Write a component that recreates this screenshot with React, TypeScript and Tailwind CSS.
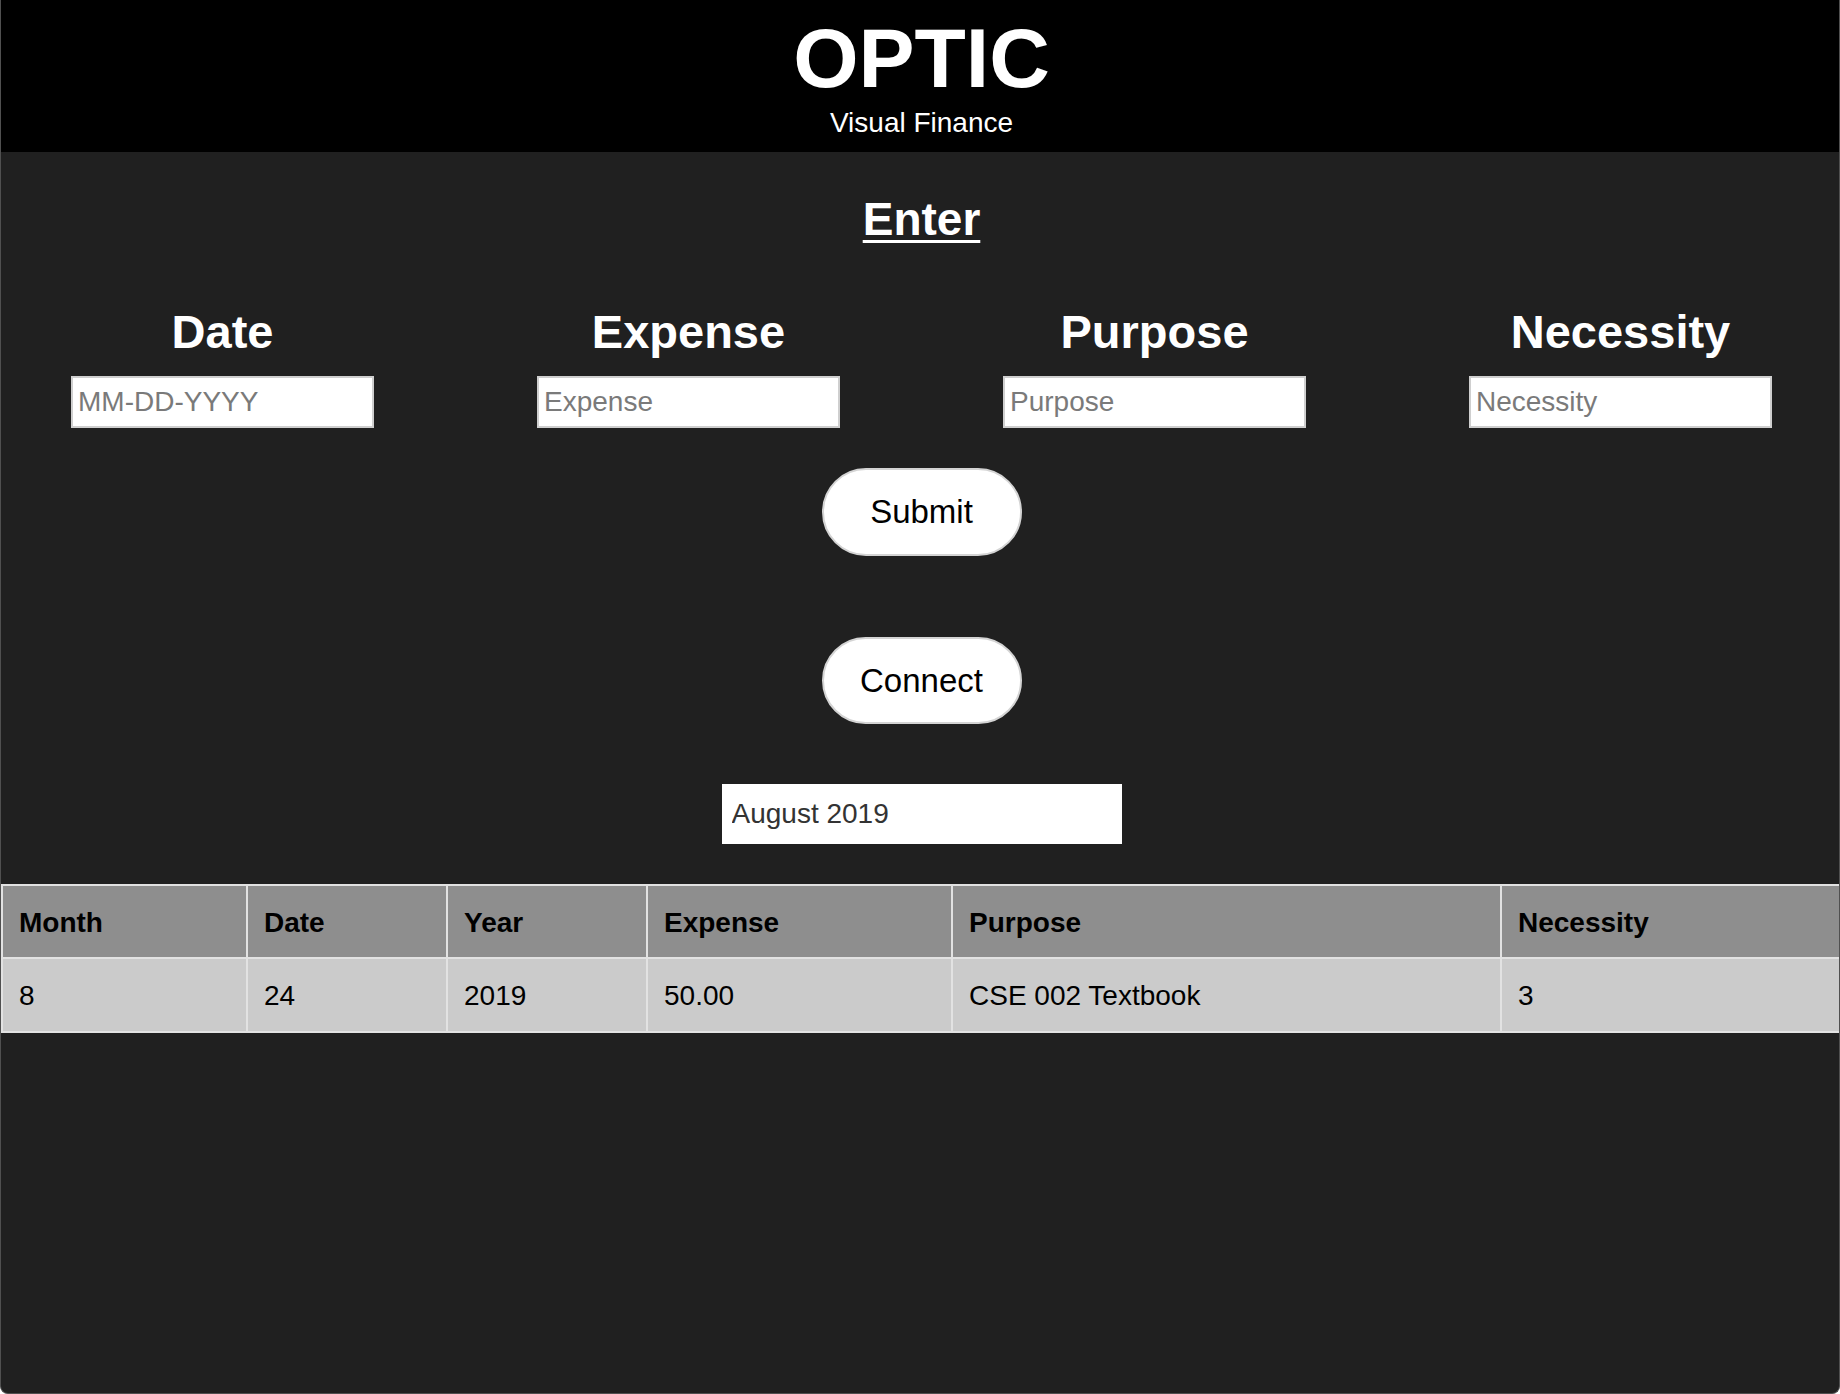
import { useState } from 'react';

type Row = {
  month: string;
  date: string;
  year: string;
  expense: string;
  purpose: string;
  necessity: string;
};

const fields = [
  { label: 'Date', placeholder: 'MM-DD-YYYY' },
  { label: 'Expense', placeholder: 'Expense' },
  { label: 'Purpose', placeholder: 'Purpose' },
  { label: 'Necessity', placeholder: 'Necessity' },
];

const rows: Row[] = [
  { month: '8', date: '24', year: '2019', expense: '50.00', purpose: 'CSE 002 Textbook', necessity: '3' },
];

export default function App() {
  const [values, setValues] = useState<string[]>(['', '', '', '']);
  const [month, setMonth] = useState('August 2019');

  return (
    <div className="min-h-[1394px] bg-[#202020] font-['Liberation_Sans',Arial,sans-serif] border-x border-b border-[#505050] rounded-b-lg overflow-hidden">
      {/* Header */}
      <header className="h-[152px] bg-black text-white text-center pt-[16px] pl-[3px]">
        <h1 className="text-[84px] font-bold leading-none">OPTIC</h1>
        <p className="mt-[9px] text-[28px] leading-none">Visual Finance</p>
      </header>

      {/* Entry form */}
      <section className="flex flex-col items-center text-white pl-[3px]">
        <h2 className="mt-[44px] text-[46px] font-bold leading-none underline underline-offset-[5px] decoration-[3px]">Enter</h2>

        <div className="mt-[66px] flex justify-center gap-[163px]">
          {fields.map((f, i) => (
            <div key={f.label} className="w-[303px] flex flex-col items-center">
              <h3 className="text-[47px] font-bold leading-none">{f.label}</h3>
              <input
                className="mt-[21px] w-[303px] h-[52px] bg-white border-2 border-[#cfcfcf] px-[5px] text-[28px] text-black placeholder:text-[#7a7a7a] outline-none"
                placeholder={f.placeholder}
                value={values[i]}
                onChange={(e) => {
                  const next = [...values];
                  next[i] = e.target.value;
                  setValues(next);
                }}
              />
            </div>
          ))}
        </div>

        <button className="mt-[40px] w-[200px] h-[88px] rounded-full bg-white border-2 border-[#d4d4d4] text-black text-[33px]">
          Submit
        </button>

        <button className="mt-[81px] w-[200px] h-[87px] rounded-full bg-white border-2 border-[#d4d4d4] text-black text-[33px]">
          Connect
        </button>

        <input
          className="mt-[60px] w-[400px] h-[60px] bg-white px-[10px] text-[28px] text-[#333] outline-none"
          value={month}
          onChange={(e) => setMonth(e.target.value)}
        />
      </section>

      {/* Expense table */}
      <table className="mt-[40px] w-full table-fixed border-collapse text-[28px] text-black">
        <colgroup>
          <col className="w-[245px]" />
          <col className="w-[200px]" />
          <col className="w-[200px]" />
          <col className="w-[305px]" />
          <col className="w-[549px]" />
          <col />
        </colgroup>
        <thead>
          <tr className="bg-[#8e8e8e] h-[73px]">
            {['Month', 'Date', 'Year', 'Expense', 'Purpose', 'Necessity'].map((h) => (
              <th key={h} className="border-2 border-r-0 border-[#e2e2e2] text-left font-bold pl-[16px] pt-[2px]">{h}</th>
            ))}
          </tr>
        </thead>
        <tbody>
          {rows.map((r, i) => (
            <tr key={i} className="bg-[#cbcbcb] h-[74px]">
              {[r.month, r.date, r.year, r.expense, r.purpose, r.necessity].map((v, j) => (
                <td key={j} className="border-2 border-r-0 border-[#e2e2e2] pl-[16px] pt-[2px]">{v}</td>
              ))}
            </tr>
          ))}
        </tbody>
      </table>
    </div>
  );
}
